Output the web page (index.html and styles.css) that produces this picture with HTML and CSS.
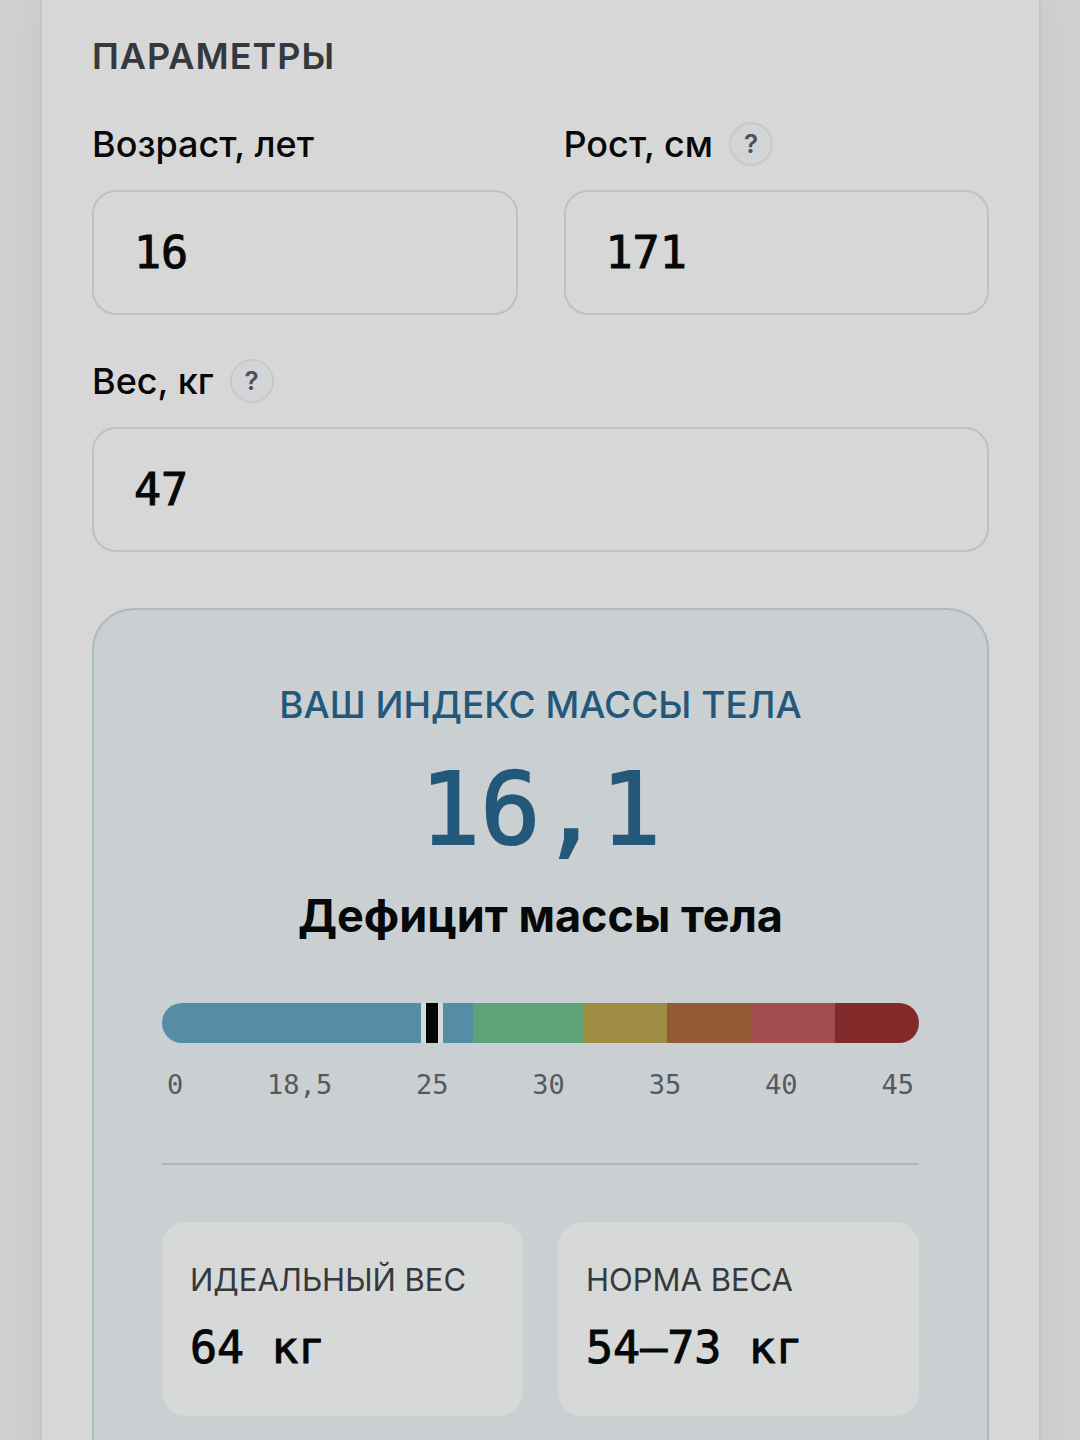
FILE: index.html
```
<!DOCTYPE html>
<html lang="ru">
<head>
  <meta charset="UTF-8">
  <meta name="viewport" content="width=device-width, initial-scale=1.0">
  <title>Калькулятор ИМТ</title>
  <link rel="stylesheet" href="styles.css">
</head>
<body>
  <main class="calculator">
    <form class="params">
      <h2>Параметры</h2>
      <div class="fields">
        <div class="field">
          <div class="field-head">
            <label for="age">Возраст, лет</label>
          </div>
          <input type="text" inputmode="numeric" id="age" value="16">
        </div>
        <div class="field">
          <div class="field-head">
            <label for="height">Рост, см</label>
            <button type="button" class="hint">?</button>
          </div>
          <input type="text" inputmode="numeric" id="height" value="171">
        </div>
        <div class="field field-wide">
          <div class="field-head">
            <label for="weight">Вес, кг</label>
            <button type="button" class="hint">?</button>
          </div>
          <input type="text" inputmode="numeric" id="weight" value="47">
        </div>
      </div>
    </form>

    <section class="result">
      <h3>Ваш индекс массы тела</h3>
      <div class="bmi-value">16,1</div>
      <p class="bmi-status">Дефицит массы тела</p>

      <div class="scale">
        <div class="zone zone-under"></div>
        <div class="zone zone-normal"></div>
        <div class="zone zone-over"></div>
        <div class="zone zone-obese1"></div>
        <div class="zone zone-obese2"></div>
        <div class="zone zone-obese3"></div>
        <div class="marker" style="left: 35.7%"></div>
      </div>
      <div class="scale-labels">
        <span>0</span>
        <span>18,5</span>
        <span>25</span>
        <span>30</span>
        <span>35</span>
        <span>40</span>
        <span>45</span>
      </div>

      <div class="stats">
        <div class="stat">
          <div class="stat-label">Идеальный вес</div>
          <div class="stat-value">64 кг</div>
        </div>
        <div class="stat">
          <div class="stat-label">Норма веса</div>
          <div class="stat-value">54–73 кг</div>
        </div>
      </div>
    </section>
  </main>
</body>
</html>
```
FILE: styles.css
```
* {
  box-sizing: border-box;
}

body {
  margin: 0;
  height: 100vh;
  overflow: hidden;
  background: #cfd0d2;
  color: #070809;
  font-family: Inter, "Noto Sans", sans-serif;
}

h2, h3, p {
  margin: 0;
}

.calculator {
  margin: 0 39px 0 40px;
  padding: 34px 50px 60px;
  background: #d7d7d7;
  border: 2px solid #c4c6c6;
  border-width: 0 2px;
  box-shadow: 0 0 32px rgba(60, 70, 70, 0.06);
}

.params h2 {
  margin-bottom: 44px;
  color: #33393c;
  font-size: 36px;
  font-weight: 600;
  line-height: 44px;
  letter-spacing: 1px;
  text-transform: uppercase;
}

.fields {
  display: grid;
  grid-template-columns: 1fr 1fr;
  gap: 44px 46px;
}

.field-wide {
  grid-column: 1 / -1;
}

.field-head {
  display: flex;
  align-items: center;
  gap: 16px;
  height: 44px;
  margin-bottom: 24px;
  font-size: 36px;
  font-weight: 500;
}

.hint {
  width: 44px;
  height: 44px;
  padding: 0;
  border: 2px solid #c6c8c9;
  border-radius: 50%;
  background: #d3d4d6;
  color: #4d4e58;
  font-family: inherit;
  font-size: 26px;
  font-weight: 600;
  line-height: 40px;
}

.field input {
  display: block;
  width: 100%;
  height: 125px;
  padding: 0 40px;
  border: 2px solid #bfc1c1;
  border-radius: 24px;
  background: #d7d7d7;
  color: inherit;
  font-family: "DejaVu Sans Mono", monospace;
  font-size: 45px;
  -webkit-text-stroke: 1px currentColor;
}

.result {
  margin-top: 56px;
  padding: 70px 68px;
  border: 2px solid #abbabd;
  border-radius: 42px;
  background: #cacfd2;
  text-align: center;
}

.result h3 {
  color: #23587b;
  font-size: 37px;
  font-weight: 500;
  line-height: 50px;
  text-transform: uppercase;
}

.bmi-value {
  margin-top: 20px;
  color: #23587b;
  font-family: "DejaVu Sans Mono", monospace;
  font-size: 100px;
  line-height: 120px;
  -webkit-text-stroke: 2px currentColor;
}

.bmi-status {
  margin-top: 16px;
  font-size: 45px;
  font-weight: 700;
  line-height: 60px;
}

.scale {
  position: relative;
  display: flex;
  height: 40px;
  margin-top: 57px;
  border-radius: 20px;
  overflow: hidden;
}

.zone-under { flex: 185; background: #568da6; }
.zone-normal { flex: 65; background: #5da377; }
.zone-over { flex: 50; background: #9f8d43; }
.zone-obese1 { flex: 50; background: #945935; }
.zone-obese2 { flex: 50; background: #a04e51; }
.zone-obese3 { flex: 50; background: #822a29; }

.marker {
  position: absolute;
  top: 0;
  bottom: 0;
  width: 12px;
  margin-left: -6px;
  background: #050607;
  box-shadow: 0 0 0 5px #d7d9da;
}

.scale-labels {
  display: flex;
  justify-content: space-between;
  margin-top: 24px;
  padding: 0 5px;
  color: #555a61;
  font-family: "DejaVu Sans Mono", monospace;
  font-size: 27px;
  line-height: 36px;
}

.stats {
  display: grid;
  grid-template-columns: 1fr 1fr;
  gap: 35px;
  margin-top: 60px;
  padding-top: 57px;
  border-top: 2px solid #aab6b9;
  text-align: left;
}

.stat {
  padding: 34px 28px 38px;
  border-radius: 24px;
  background: #d7d8d8;
}

.stat-label {
  color: #36393c;
  font-size: 31px;
  line-height: 48px;
  text-transform: uppercase;
}

.stat-value {
  margin-top: 14px;
  font-family: "DejaVu Sans Mono", monospace;
  font-size: 45px;
  line-height: 60px;
  -webkit-text-stroke: 1px currentColor;
}
```
